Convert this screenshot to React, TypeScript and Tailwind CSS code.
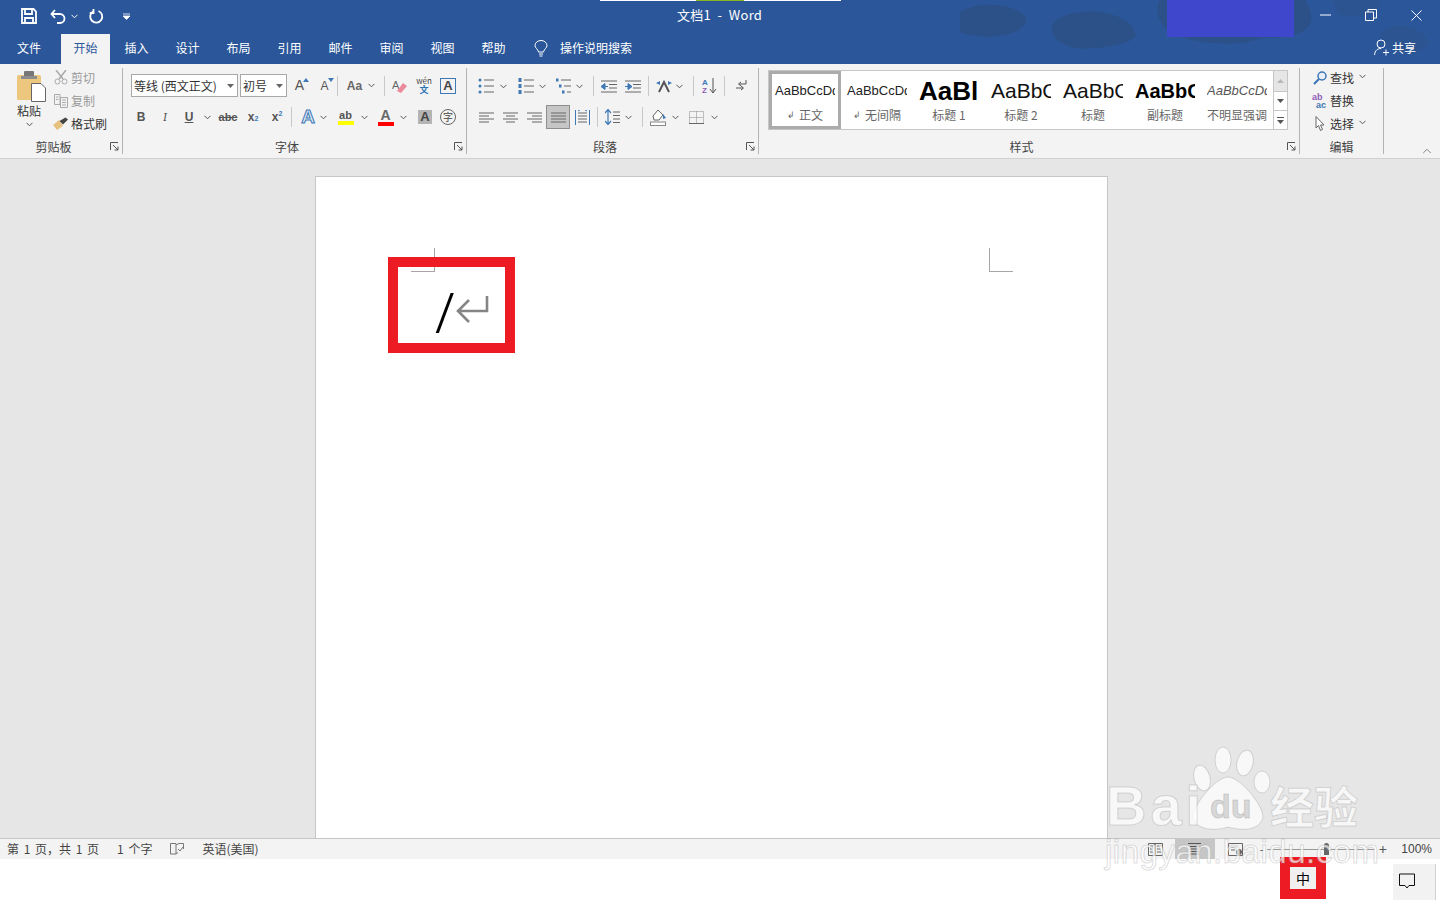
import React from 'react';
import { ChevronUp } from 'lucide-react';

const cjk = { fontFamily: '"Noto Sans CJK SC", "Liberation Sans", sans-serif' };
const tabs = ['插入', '设计', '布局', '引用', '邮件', '审阅', '视图', '帮助'];

const Chev = ({ className = 'text-[#555]' }: { className?: string }) => (
  <svg width="7" height="5" viewBox="0 0 7 5" className={`shrink-0 ${className}`}>
    <path d="M0.5 0.8 L3.5 3.8 L6.5 0.8" fill="none" stroke="currentColor" strokeWidth="1" />
  </svg>
);

const Sep = () => <div className="w-px h-[20px] bg-[#c8c8c8] shrink-0" />;

// small launcher in the corner of a ribbon group
const Launcher = () => (
  <svg width="9" height="9" viewBox="0 0 9 9" className="absolute right-[3px] bottom-[3px] text-[#555]">
    <path d="M0.5 8V0.5H8M3 3L8 8M8 4.5V8H4.5" fill="none" stroke="currentColor" strokeWidth="1" />
  </svg>
);

const Cell = ({ w = 24, children, className = '' }: { w?: number; children?: React.ReactNode; className?: string }) => (
  <div className={`h-[24px] flex items-center justify-center shrink-0 ${className}`} style={{ width: w }}>
    {children}
  </div>
);

const Lines = ({ align }: { align: 'l' | 'c' | 'r' | 'j' }) => {
  const rows = align === 'l' ? [[0, 15], [0, 10], [0, 15], [0, 10]]
    : align === 'c' ? [[0, 15], [3, 12], [0, 15], [3, 12]]
    : align === 'r' ? [[0, 15], [5, 15], [0, 15], [5, 15]]
    : [[0, 15], [0, 15], [0, 15], [0, 15]];
  return (
    <svg width="15" height="11" viewBox="0 0 15 11" className="text-[#666]">
      {rows.map((r, i) => <path key={i} d={`M${r[0]} ${i * 3 + 1}H${r[1]}`} stroke="currentColor" strokeWidth="1" />)}
    </svg>
  );
};

const ListIcon = ({ kind }: { kind: 'bullet' | 'num' | 'multi' }) => (
  <svg width="16" height="16" viewBox="0 0 16 16">
    {kind === 'bullet' && [2, 8, 14].map(y => <circle key={y} cx="2" cy={y} r="1.5" fill="#3e78b5" />)}
    {kind === 'num' && [2, 8, 14].map(y => <rect key={y} x="0.5" y={y - 2} width="3" height="4" fill="#3e78b5" />)}
    {kind === 'multi' && [[0, 2], [3, 8], [6, 14]].map(([x, y]) => <rect key={y} x={x} y={y - 1.5} width="2.5" height="3" fill="#3e78b5" />)}
    {kind === 'multi'
      ? <path d="M5 2H15M8 8H15M11 14H15" stroke="#666" strokeWidth="1" />
      : <path d="M6 2H16M6 8H16M6 14H16" stroke="#666" strokeWidth="1" />}
  </svg>
);

const Indent = ({ out }: { out?: boolean }) => (
  <svg width="16" height="13" viewBox="0 0 16 13">
    <path d="M0 1H16M8 4.5H16M8 8H16M0 12H16" stroke="#666" strokeWidth="1" />
    <path d={out ? 'M0 6.5L4 3.5V9.5Z M4 6.5H7' : 'M7 6.5L3 3.5V9.5Z M0 6.5H3'} fill="#3e78b5" stroke="#3e78b5" strokeWidth="1" />
  </svg>
);

const StyleItem = ({ sample, label, mark, className, selected }: { sample: string; label: string; mark?: boolean; className: string; selected?: boolean }) => (
  <div className={`w-[72px] h-full shrink-0 flex flex-col items-center overflow-hidden ${selected ? 'border-[3px] border-[#ababab] outline outline-1 -outline-offset-[4px] outline-white' : 'border-[3px] border-transparent'}`}>
    <div className="h-[33px] pt-[1px] w-[60px] overflow-hidden flex items-center justify-start whitespace-nowrap">
      <span className={className} style={{ fontFamily: '"Liberation Sans", sans-serif' }}>{sample}</span>
    </div>
    <div className="flex items-center gap-[4px] text-[12px] leading-[16px] text-[#666] whitespace-nowrap" style={cjk}>
      {mark && <span className="text-[9px] text-[#666]">↲</span>}
      {label}
    </div>
  </div>
);

const Group = ({ width, label, launcher, children }: { width: number; label: string; launcher?: boolean; children: React.ReactNode }) => (
  <div className="relative h-[86px] shrink-0 border-r border-[#b4b4b4] flex flex-col" style={{ width }}>
    <div className="flex-1 min-h-0">{children}</div>
    <div className={`h-[15px] leading-[15px] text-center text-[12px] text-[#444] ${launcher ? 'pr-[15px]' : ''}`} style={cjk}>{label}</div>
    {launcher && <Launcher />}
  </div>
);

const ToolRow = ({ icon, label, dim, chev }: { icon: React.ReactNode; label: string; dim?: boolean; chev?: boolean }) => (
  <div className={`h-[23px] flex items-center text-[12px] ${dim ? 'text-[#9a9a9a]' : 'text-[#333]'}`} style={cjk}>
    <span className="w-[18px] flex justify-center">{icon}</span>
    <span className="ml-[1px]">{label}</span>
    {chev && <span className="ml-[5px] mb-[2px]"><Chev /></span>}
  </div>
);

const App: React.FC = () => {
  return (
    <div className="relative w-[1440px] h-[900px] overflow-hidden flex flex-col bg-white" style={cjk}>
      <div className="relative bg-[#2b579a] shrink-0">
        {/* title bar artwork */}
        <svg width="480" height="64" viewBox="0 0 480 64" className="absolute left-[960px] top-0">
          <path d="M0 12C22 -2 68 6 66 22C60 38 20 40 0 32Z M92 25C104 5 170 6 176 35C172 46 130 50 115 48C100 44 90 38 92 25Z M200 0H345C362 25 345 40 300 38C285 47 230 45 210 32C195 20 196 8 200 0Z" fill="#2c5186" opacity="0.9" />
          <path d="M420 35C428 20 462 24 468 42C462 58 428 58 420 35Z M372 0H420C425 14 395 20 378 14Z" fill="#2c5186" opacity="0.45" />
        </svg>
        <div className="absolute left-[1167px] top-0 w-[127px] h-[37px] bg-[#3f48cc]" />

        {/* Title bar */}
        <div className="relative h-[35px] flex items-center text-white">
          <div className="pl-[21px] pb-[3px] flex items-center">
            <svg width="16" height="16" viewBox="0 0 16 16" className="mr-[13px]">
              <path d="M1 1H12.5L15 3.5V15H1ZM4 1.5V6H11V1.5M4 15V10H12V15" fill="none" stroke="#fff" strokeWidth="1.8" />
            </svg>
            <svg width="16" height="15" viewBox="0 0 16 15">
              <path d="M1.5 5H10A4.5 4.5 0 0 1 10 14H7M5 1L1.5 5L5 9" fill="none" stroke="#fff" strokeWidth="1.8" />
            </svg>
            <span className="ml-[5px] mr-[11px]"><Chev className="text-white" /></span>
            <svg width="15" height="15" viewBox="0 0 15 15">
              <path d="M9.5 2A6 6 0 1 1 4 2.5M4.5 0V4H0.8" fill="none" stroke="#fff" strokeWidth="1.8" />
            </svg>
            <svg width="7" height="7" viewBox="0 0 7 7" className="ml-[19px]">
              <path d="M0 1H7M0 3H7L3.5 6.5Z" fill="#fff" stroke="#fff" strokeWidth="0.8" />
            </svg>
          </div>
          <div className="absolute left-[677px] top-[6px] text-[13px] leading-[18px] tracking-[0.3px] whitespace-nowrap" style={{ fontFamily: '"Noto Sans CJK SC", "Open Sans", sans-serif' }}>文档1&nbsp; -&nbsp; Word</div>
          <div className="absolute left-[600px] top-0 w-[241px] h-px bg-white" />
          <div className="absolute left-[696px] top-0 w-[48px] h-px bg-[#8bb51c]" />
          <div className="ml-auto pr-[18px] pb-[5px] flex items-center">
            <svg width="11" height="2" viewBox="0 0 11 2"><path d="M0 1H11" stroke="#fff" /></svg>
            <svg width="12" height="12" viewBox="0 0 12 12" className="ml-[34px]"><path d="M0.5 3H8.5V11.5H0.5ZM3 3V0.5H11.5V9H8.5" fill="none" stroke="#fff" /></svg>
            <svg width="11" height="11" viewBox="0 0 11 11" className="ml-[34px]"><path d="M0.5 0.5L10.5 10.5M10.5 0.5L0.5 10.5" stroke="#fff" /></svg>
          </div>
        </div>

        {/* Tab row */}
        <div className="relative h-[29px] flex items-stretch text-white text-[12px]">
          <div className="w-[61px] pl-[17px] leading-[25px]">文件</div>
          <div className="w-[49px] bg-[#f3f3f3] text-[#2b579a] text-center leading-[25px] mt-[-1px] pt-[1px]">开始</div>
          <div className="flex pl-[1px]">
            {tabs.map(t => <div key={t} className="w-[51px] text-center leading-[25px] whitespace-nowrap">{t}</div>)}
          </div>
          <div className="flex items-center ml-[15px] h-[26px]">
            <svg width="14" height="17" viewBox="0 0 14 17">
              <path d="M4.5 12C4 9 1 8 1 5.5A6 5 0 0 1 13 5.5C13 8 10 9 9.5 12ZM5 14H9M5.5 16H8.5" fill="none" stroke="#fff" strokeWidth="1" />
            </svg>
            <span className="ml-[12px]">操作说明搜索</span>
          </div>
          <div className="ml-auto flex items-center h-[25px] pr-[24px]">
            <svg width="15" height="17" viewBox="0 0 15 17">
              <circle cx="7" cy="5" r="4" fill="none" stroke="#fff" />
              <path d="M0.5 16C1 11 4 9.5 7 9.5M9 13.5H15M12 10.5V16.5" fill="none" stroke="#fff" />
            </svg>
            <span className="ml-[3px]">共享</span>
          </div>
        </div>
      </div>

      {/* Ribbon */}
      <div className="h-[95px] bg-[#f3f3f3] border-b border-[#d0d0d0] flex items-start pt-[4px] shrink-0 relative">
        {/* clipboard */}
        <Group width={123} label="剪贴板" launcher>
          <div className="flex">
            <div className="w-[54px] pl-[17px] flex flex-col items-start">
              <svg width="29" height="31" viewBox="0 0 29 31" className="mt-[3px]">
                <rect x="0" y="4" width="24" height="25" rx="1.5" fill="#eec77e" />
                <rect x="7" y="0" width="10" height="7" rx="1" fill="#777" />
                <rect x="4" y="5" width="16" height="3" fill="#8d8d8d" />
                <path d="M14.5 12.5H24L28.5 17V30.5H14.5Z" fill="#fff" stroke="#666" />
              </svg>
              <div className="text-[12px] leading-[16px] text-[#333] mt-[1px]">粘贴</div>
              <div className="w-[24px] flex justify-center mt-[3px]"><Chev /></div>
            </div>
            <div className="-mt-[2px] -ml-[2px]">
              <ToolRow dim label="剪切" icon={<svg width="14" height="15" viewBox="0 0 14 15"><path d="M2 0L9 9M12 0L5 9" stroke="#a8a8a8" strokeWidth="1.5" /><circle cx="3.5" cy="11.5" r="2.5" fill="none" stroke="#a8a8a8" /><circle cx="10.5" cy="11.5" r="2.5" fill="none" stroke="#a8a8a8" /></svg>} />
              <ToolRow dim label="复制" icon={<svg width="14" height="14" viewBox="0 0 14 14"><path d="M0.5 0.5H6V10.5H0.5ZM6.5 3.5H13.5V13.5H6.5ZM8 6H12M8 8.5H12M8 11H12M2 3H4.5M2 5.5H4.5" fill="none" stroke="#aaa" /></svg>} />
              <ToolRow label="格式刷" icon={<svg width="16" height="14" viewBox="0 0 16 14"><path d="M0 8L6 3L10 9L4 13Z" fill="#e6c180" /><path d="M6.5 4L12.5 0.5L15 2.5L10 7.5Z" fill="#444" /></svg>} />
            </div>
          </div>
        </Group>

        {/* font */}
        <Group width={344} label="字体" launcher>
          <div className="pl-[8px] pt-[7px] flex items-center h-[24px] mt-[2px]">
            <div className="w-[107px] h-[23px] border border-[#a8a8a8] bg-white flex items-center pl-[2px] text-[12px] text-[#333] whitespace-nowrap">
              等线 (西文正文)
              <svg width="7" height="4" viewBox="0 0 7 4" className="ml-auto mr-[3px]"><path d="M0 0H7L3.5 4Z" fill="#666" /></svg>
            </div>
            <div className="w-[47px] h-[23px] ml-[2px] border border-[#a8a8a8] bg-white flex items-center pl-[2px] text-[12px] text-[#333]">
              初号
              <svg width="7" height="4" viewBox="0 0 7 4" className="ml-auto mr-[3px]"><path d="M0 0H7L3.5 4Z" fill="#666" /></svg>
            </div>
            <div className="flex items-center" style={{ fontFamily: '"Liberation Sans", sans-serif' }}>
              <Cell w={25}><span className="relative text-[14px] text-[#555]">A<svg width="6" height="4" viewBox="0 0 6 4" className="absolute -right-[5px] top-[3px]"><path d="M0 4L3 0L6 4Z" fill="#3e78b5" /></svg></span></Cell>
              <Cell w={25}><span className="relative text-[12px] text-[#555]">A<svg width="6" height="4" viewBox="0 0 6 4" className="absolute -right-[5px] top-[1px]"><path d="M0 0L3 4L6 0Z" fill="#3e78b5" /></svg></span></Cell>
              <Sep />
              <Cell w={30} className="pl-[3px]"><span className="text-[12px] text-[#666] font-bold">Aa</span></Cell>
              <Chev />
              <span className="w-[9px]" />
              <Sep />
              <Cell w={27} className="pl-[2px]">
                <svg width="16" height="16" viewBox="0 0 16 16"><text x="0" y="11" fontSize="11" fill="#666" fontFamily="Liberation Sans">A</text><path d="M5 13L11 5L15 8L9 15Z" fill="#ea8a9b" /></svg>
              </Cell>
              <Cell w={24}>
                <div className="flex flex-col items-center leading-none text-[9px] text-[#444]" style={cjk}>
                  <span className="text-[8px] leading-[9px]">wén</span>
                  <span className="text-[#2f75b5] font-bold text-[9px] leading-[10px]">文</span>
                </div>
              </Cell>
              <Cell w={24}>
                <span className="w-[16px] h-[16px] border border-[#3e78b5] text-[#444] text-[13px] leading-[14px] text-center font-bold">A</span>
              </Cell>
            </div>
          </div>
          <div className="pl-[6px] pt-[7px] mt-[4px] flex items-center" style={{ fontFamily: '"Liberation Sans", sans-serif' }}>
            <Cell className="font-bold text-[12px] text-[#555]">B</Cell>
            <Cell className="italic text-[12px] text-[#555] font-serif">I</Cell>
            <Cell className="font-bold text-[12px] text-[#555] underline">U</Cell>
            <span className="ml-[3px]"><Chev /></span>
            <span className="w-[4px]" />
            <Cell w={26} className="font-bold text-[11px] text-[#555] line-through">abc</Cell>
            <Cell w={24} className="font-bold text-[12px] text-[#555]">x<sub className="text-[7px] text-[#3e78b5]">2</sub></Cell>
            <Cell w={24} className="font-bold text-[12px] text-[#555]">x<sup className="text-[7px] text-[#3e78b5]">2</sup></Cell>
            <span className="w-[2px]" />
            <Sep />
            <Cell w={28} className="pl-[4px]"><span className="text-[19px] font-bold text-[#dbe7f4] [-webkit-text-stroke:1px_#3e78b5]">A</span></Cell>
            <Chev />
            <Cell w={34} className="pl-[3px]">
              <div className="flex flex-col items-center">
                <span className="text-[11px] font-bold leading-[12px] text-[#555]">ab</span>
                <span className="w-[16px] h-[4px] bg-[#ffff00]" />
              </div>
            </Cell>
            <Chev />
            <Cell w={32} className="pl-[3px]">
              <div className="flex flex-col items-center">
                <span className="text-[14px] font-bold leading-[13px] text-[#666]">A</span>
                <span className="w-[16px] h-[4px] bg-[#ff0000]" />
              </div>
            </Cell>
            <Chev />
            <Cell w={26} className="pl-[10px]"><span className="w-[14px] h-[14px] bg-[#b4b4b4] text-[13px] leading-[14px] text-center font-bold text-[#444]">A</span></Cell>
            <Cell w={24} className="pl-[6px]"><span className="w-[16px] h-[16px] rounded-full border border-[#666] text-[10px] leading-[14px] text-center text-[#444]" style={cjk}>字</span></Cell>
          </div>
        </Group>

        {/* paragraph */}
        <Group width={292} label="段落" launcher>
          <div className="pl-[10px] pt-[6px] flex items-center">
            <Cell w={17}><ListIcon kind="bullet" /></Cell>
            <span className="ml-[6px] mr-[10px]"><Chev /></span>
            <Cell w={17}><ListIcon kind="num" /></Cell>
            <span className="ml-[5px] mr-[8px]"><Chev /></span>
            <Cell w={19}><ListIcon kind="multi" /></Cell>
            <span className="ml-[3px] mr-[10px]"><Chev /></span>
            <Sep />
            <Cell w={24} className="ml-[3px]"><Indent out /></Cell>
            <Cell w={24}><Indent /></Cell>
            <span className="w-[3px]" />
            <Sep />
            <Cell w={24} className="ml-[3px]">
              <svg width="16" height="13" viewBox="0 0 16 13"><path d="M3 12L8 2L13 12" fill="none" stroke="#555" strokeWidth="2" /><path d="M0 3L4 1V5ZM16 3L12 1V5Z" fill="#3e78b5" /></svg>
            </Cell>
            <Chev />
            <span className="w-[10px]" />
            <Sep />
            <Cell w={24} className="ml-[3px]">
              <svg width="15" height="16" viewBox="0 0 15 16">
                <text x="0" y="7" fontSize="8" fontWeight="bold" fill="#3e78b5" fontFamily="Liberation Sans">A</text>
                <text x="0" y="15" fontSize="8" fontWeight="bold" fill="#8f5db7" fontFamily="Liberation Sans">Z</text>
                <path d="M11 0V14M8 11L11 15L14 11" fill="none" stroke="#555" />
              </svg>
            </Cell>
            <span className="w-[3px]" />
            <Sep />
            <Cell w={31}>
              <svg width="12" height="14" viewBox="0 0 12 14"><path d="M11 1V5H4M6 3L3.5 5L6 7M1 9H8M6 7L8.5 9L6 11" fill="none" stroke="#555" /></svg>
            </Cell>
          </div>
          <div className="pl-[7px] pt-[7px] flex items-center">
            <Cell><Lines align="l" /></Cell>
            <Cell><Lines align="c" /></Cell>
            <Cell><Lines align="r" /></Cell>
            <Cell className="bg-[#c6c6c6] border border-[#8e8e8e]"><Lines align="j" /></Cell>
            <Cell>
              <svg width="15" height="15" viewBox="0 0 15 15"><path d="M0.5 0V15M14.5 0V15" stroke="#3e78b5" /><path d="M3 3H12M3 6H12M3 9H12M3 12H12" stroke="#666" /><path d="M3 1L5 0M12 1L10 0" stroke="#3e78b5" /></svg>
            </Cell>
            <span className="w-[3px]" />
            <Sep />
            <Cell w={26} className="pl-[3px]">
              <svg width="15" height="16" viewBox="0 0 15 16"><path d="M3 1V15M0 4L3 0.5L6 4M0 12L3 15.5L6 12" fill="none" stroke="#3e78b5" strokeWidth="1.2" /><path d="M8 3H15M8 6.5H15M8 10H15M8 13.5H15" stroke="#666" /></svg>
            </Cell>
            <span className="ml-[1px] mr-[10px]"><Chev /></span>
            <Sep />
            <Cell w={24} className="pl-[6px]">
              <svg width="17" height="17" viewBox="0 0 17 17"><path d="M3 7L8 1L13 6L9 11H4Z" fill="#fff" stroke="#666" /><path d="M13 5L16 9L13 10Z" fill="#3e78b5" /><rect x="0.5" y="13" width="15" height="3.5" fill="#fff" stroke="#888" /></svg>
            </Cell>
            <span className="ml-[5px] mr-[5px]"><Chev /></span>
            <Cell w={24}>
              <svg width="15" height="13" viewBox="0 0 15 13"><path d="M0.5 0.5H14.5V12.5H0.5ZM7.5 0.5V12.5M0.5 6.5H14.5" fill="none" stroke="#888" strokeDasharray="1 1" /><path d="M0 12.5H15" stroke="#666" /></svg>
            </Cell>
            <span className="ml-[3px]"><Chev /></span>
          </div>
        </Group>

        {/* styles */}
        <Group width={541} label="样式" launcher>
          <div className="ml-[9px] mt-[2px] w-[520px] h-[60px] border border-[#c6c6c6] bg-white flex">
            <div className="flex flex-1 min-w-0 overflow-hidden">
              <StyleItem selected sample="AaBbCcDd" label="正文" mark className="text-[13px] text-[#222]" />
              <StyleItem sample="AaBbCcDd" label="无间隔" mark className="text-[13px] text-[#222]" />
              <StyleItem sample="AaBl" label="标题 1" className="text-[26px] text-black font-bold" />
              <StyleItem sample="AaBbC" label="标题 2" className="text-[21px] text-[#111]" />
              <StyleItem sample="AaBbC" label="标题" className="text-[21px] text-[#111]" />
              <StyleItem sample="AaBbC" label="副标题" className="text-[20px] text-black font-bold" />
              <StyleItem sample="AaBbCcDd" label="不明显强调" className="text-[13px] italic text-[#555]" />
            </div>
            <div className="w-[14px] border-l border-[#c6c6c6] flex flex-col shrink-0">
              <div className="h-[21px] bg-[#e6e6e6] border-b border-[#c6c6c6] flex items-center justify-center">
                <svg width="7" height="4" viewBox="0 0 7 4"><path d="M0 4H7L3.5 0Z" fill="#b8b8b8" /></svg>
              </div>
              <div className="h-[19px] border-b border-[#c6c6c6] flex items-center justify-center">
                <svg width="7" height="4" viewBox="0 0 7 4"><path d="M0 0H7L3.5 4Z" fill="#555" /></svg>
              </div>
              <div className="flex-1 flex flex-col items-center justify-center gap-[2px]">
                <span className="w-[7px] h-px bg-[#555]" />
                <svg width="7" height="4" viewBox="0 0 7 4"><path d="M0 0H7L3.5 4Z" fill="#555" /></svg>
              </div>
            </div>
          </div>
        </Group>

        {/* editing */}
        <Group width={84} label="编辑">
          <div className="pl-[11px] -mt-[2px]">
            <ToolRow chev label="查找" icon={<svg width="14" height="14" viewBox="0 0 14 14"><circle cx="9" cy="5" r="4" fill="#e9f0f8" stroke="#3e78b5" strokeWidth="1.5" /><path d="M6 8L1 13" stroke="#3e78b5" strokeWidth="2.2" /></svg>} />
            <ToolRow label="替换" icon={<svg width="16" height="16" viewBox="0 0 16 16"><text x="0" y="7" fontSize="9" fontWeight="bold" fill="#8f5db7" fontFamily="Liberation Sans">ab</text><text x="4" y="15" fontSize="9" fontWeight="bold" fill="#3e78b5" fontFamily="Liberation Sans">ac</text></svg>} />
            <ToolRow chev label="选择" icon={<svg width="10" height="15" viewBox="0 0 10 15"><path d="M1 0.5V12L3.5 9.5L5.5 14.5L7.5 13.5L5.5 9H9Z" fill="#fff" stroke="#666" /></svg>} />
          </div>
        </Group>
        <ChevronUp className="absolute right-[6px] bottom-[0px] text-[#555]" size={14} strokeWidth={1.2} />
      </div>

      {/* Document area */}
      <div className="flex-1 min-h-0 bg-[#e6e6e6] pl-[315px] pt-[17px] overflow-hidden">
        <div className="relative w-[793px] h-full bg-white border border-b-0 border-[#c6c6c6]">
          <div className="absolute left-[95px] top-[71px] w-[24px] h-[24px] border-r border-b border-[#a6a6a6]" />
          <div className="absolute left-[673px] top-[71px] w-[24px] h-[24px] border-l border-b border-[#a6a6a6]" />
          <div className="absolute left-[119px] top-[102px] text-[56px] leading-[64px] font-light text-black" style={{ fontFamily: '"Noto Sans", sans-serif' }}>/</div>
        </div>
      </div>

      {/* Status bar */}
      <div className="h-[21px] bg-[#f3f3f3] border-t border-[#c6c6c6] flex items-center text-[12px] text-[#444] shrink-0 relative">
        <span className="ml-[7px] whitespace-nowrap [word-spacing:2px]">第 1 页，共 1 页</span>
        <span className="ml-[18px] whitespace-nowrap [word-spacing:2px]">1 个字</span>
        <svg width="14" height="12" viewBox="0 0 14 12" className="ml-[18px]">
          <path d="M0.5 0.5H6V11H0.5ZM6 2L9 0.5H13.5V6M6 11L8 9.5" fill="none" stroke="#777" />
          <path d="M8 6L10 8L13 4" fill="none" stroke="#777" />
        </svg>
        <span className="ml-[18px] whitespace-nowrap">英语(美国)</span>
        <div className="ml-auto flex items-center h-full">
          <svg width="15" height="13" viewBox="0 0 15 13" className="mr-[12px]"><path d="M0.5 0.5H7V12.5H0.5ZM7 0.5H14.5V12.5H7ZM2 3H5M2 6H5M2 9H5M9 3H13M9 6H13M9 9H13" fill="none" stroke="#666" /></svg>
          <div className="w-[40px] h-full bg-[#c6c6c6] flex items-center justify-center">
            <svg width="15" height="13" viewBox="0 0 15 13"><path d="M1 0.5H14M3 3.5H12M3 6H12M3 8.5H12M3 11H12" fill="none" stroke="#555" /></svg>
          </div>
          <svg width="15" height="13" viewBox="0 0 15 13" className="ml-[13px]"><path d="M0.5 0.5H14.5V12.5H0.5ZM3 4H9M3 7H7" fill="none" stroke="#666" /><circle cx="11" cy="9" r="3" fill="#666" /></svg>
          <span className="ml-[17px] text-[#555]">-</span>
          <div className="relative w-[108px] h-px bg-[#999] ml-[3px]">
            <span className="absolute left-[57px] -top-[6px] w-[5px] h-[12px] rounded-t-full bg-[#666]" />
          </div>
          <span className="ml-[2px] text-[#555] text-[14px] w-[12px] text-center">+</span>
          <span className="ml-[11px] mr-[8px] w-[32px] text-right" style={{ fontFamily: '"Liberation Sans", sans-serif' }}>100%</span>
        </div>
      </div>

      {/* Taskbar strip */}
      <div className="h-[41px] bg-white shrink-0 flex justify-end items-end pr-[4px]">
        <div className="w-[43px] h-[36px] bg-[#f2f2f2] border-r border-[#d0d0d0] flex items-center justify-center">
          <svg width="16" height="16" viewBox="0 0 16 16" className="-ml-[14px] -mt-[3px]"><path d="M0.5 1H15.5V12.5H10L8 15L6 12.5H0.5Z" fill="none" stroke="#111" /></svg>
        </div>
      </div>

      {/* Annotations drawn over the screenshot */}
      <div className="absolute left-[388px] top-[257px] w-[127px] h-[96px] border-[10px] border-[#ed1c24]" />
      <svg width="34" height="28" viewBox="0 0 34 28" className="absolute left-[456px] top-[296px]">
        <path d="M31 0V15H3M13 4L2 15L13 26" fill="none" stroke="#858585" strokeWidth="2.6" />
      </svg>
      <div className="absolute left-[1280px] top-[857px] w-[46px] h-[42px] border-[10px] border-[#ed1c24] bg-[#f0f0f0] flex items-center justify-center text-[14px] text-black">中</div>

      {/* Baidu watermark */}
      <div className="absolute left-[1105px] top-[745px] w-[260px] h-[125px] pointer-events-none text-white/70 [-webkit-text-stroke:1px_rgba(140,140,140,0.3)]" style={{ fontFamily: '"Liberation Sans", sans-serif' }}>
        <svg width="95" height="90" viewBox="0 0 95 90" className="absolute left-[73px] top-0">
          <g fill="#fff" fillOpacity="0.7" stroke="#8c8c8c" strokeOpacity="0.3">
            <ellipse cx="24" cy="33" rx="8" ry="13" transform="rotate(-15 24 33)" />
            <ellipse cx="45" cy="15" rx="8" ry="13" />
            <ellipse cx="67" cy="18" rx="8" ry="13" transform="rotate(12 67 18)" />
            <ellipse cx="84" cy="37" rx="8" ry="11" />
            <path d="M50 32C62 32 85 60 85 72C82 86 64 86 50 82C38 86 18 86 15 72C15 60 38 32 50 32Z" />
          </g>
        </svg>
        <span className="absolute left-[1px] top-[33px] text-[56px] leading-[56px] font-bold tracking-[4px]">Bai</span>
        <span className="absolute left-[105px] top-[44px] text-[34px] leading-[34px] font-bold text-[#d8d8d8]">du</span>
        <span className="absolute left-[165px] top-[33px] text-[44px] leading-[54px] font-bold whitespace-nowrap" style={cjk}>经验</span>
        <span className="absolute left-0 top-[89px] text-[33px] leading-[36px] whitespace-nowrap tracking-[0.5px]">jingyan.baidu.com</span>
      </div>
    </div>
  );
};

export default App;
